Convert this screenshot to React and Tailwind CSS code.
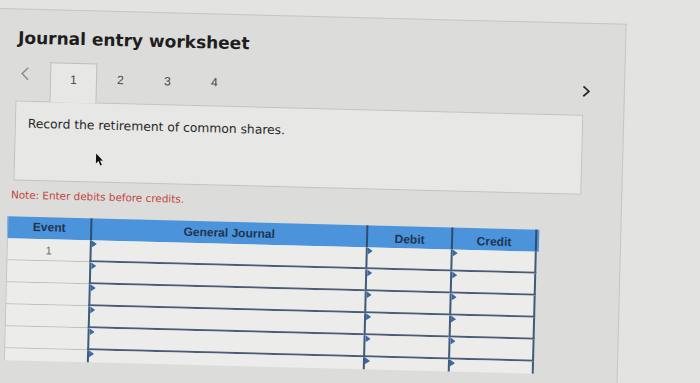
import React from "react";

function Marker() {
  return (
    <svg className="absolute left-0 top-0" width="5" height="7" viewBox="0 0 5 7">
      <polygon points="0,0 5,3.5 0,7" fill="#3a6aa6" />
    </svg>
  );
}

function InputCell({ w, last, noBottom }) {
  return (
    <div
      className={
        "relative h-full border-l-2 border-[#3f5a7a] bg-[#ecedeb] " +
        (noBottom ? "" : "border-b-2 border-b-[#4a5d76] ") +
        (last ? "border-r-2 border-r-[#3f5a7a] " : "") +
        w
      }
    >
      <Marker />
    </div>
  );
}

function Row({ num, h, noBottom }) {
  return (
    <div className={"flex " + h}>
      <div
        className={
          "w-[83px] h-full border-l border-[#c4c4c2] bg-[#ecedeb] flex justify-center pt-[3px] text-[11px] text-[#6a6a6a] " +
          (noBottom ? "" : "border-b border-b-[#bdbdbb]")
        }
      >
        {num}
      </div>
      <InputCell w="w-[276px]" noBottom={noBottom} />
      <InputCell w="w-[85px]" noBottom={noBottom} />
      <InputCell w="w-[86px]" last noBottom={noBottom} />
    </div>
  );
}

export default function App() {
  return (
    <div
      className="relative w-[700px] h-[383px] overflow-hidden bg-[#e3e3e1]"
      style={{ fontFamily: '"DejaVu Sans", Verdana, sans-serif' }}
    >
      <div className="origin-top-left rotate-[1.45deg] pt-[8px]">
        <div className="ml-[-2px] w-[629px] h-[430px] bg-[#dcdcda] border border-[#c6c6c4]">
          <div className="ml-[20px] mt-[18px] text-[17px] leading-[20px] font-bold text-[#1e1e1e]">
            Journal entry worksheet
          </div>

          <div
            className="relative z-10 ml-[19px] mt-[14px] w-[580px] h-[40px] flex items-stretch text-[12px] text-[#4a4a4a]"
            style={{ fontFamily: '"Liberation Sans", Arial, sans-serif' }}
          >
            <div className="w-[34px] flex items-center pl-[4px] pb-[16px]">
              <svg width="9" height="14" viewBox="0 0 9 14">
                <polyline points="8,1 2,7 8,13" fill="none" stroke="#8a8a8a" strokeWidth="1.4" />
              </svg>
            </div>
            <div className="w-[47px] h-[40px] border border-b-0 border-[#bdbdbb] bg-[#e7e7e5] flex justify-center pt-[7px]">
              1
            </div>
            <div className="w-[47px] flex justify-center pt-[7px]">2</div>
            <div className="w-[47px] flex justify-center pt-[7px]">3</div>
            <div className="w-[47px] flex justify-center pt-[7px]">4</div>
            <div className="ml-auto w-[20px] flex justify-center pt-[9px]">
              <svg width="9" height="13" viewBox="0 0 9 13">
                <polyline points="1.5,1.5 7,6.5 1.5,11.5" fill="none" stroke="#2a2a2a" strokeWidth="1.8" />
              </svg>
            </div>
          </div>

          <div className="relative ml-[19px] mt-[-1px] w-[568px] h-[80px] border border-[#c2c2c0] bg-[#e7e7e5] pl-[12px] pt-[14px] text-[12.3px] leading-[16px] text-[#2a2a2a]">
            Record the retirement of common shares.
            <svg className="absolute left-[80px] top-[50px]" width="9" height="13" viewBox="0 0 9 13">
              <polygon points="1,0 1,10 3.5,7.5 5.5,12 7,11.3 5,7 8,7" fill="#111" />
            </svg>
          </div>

          <div className="ml-[17px] mt-[8px] text-[10.4px] leading-[12px] text-[#c2453f]">
            Note: Enter debits before credits.
          </div>

          <div className="ml-[14px] mt-[16px] w-[532px]" style={{ fontFamily: '"Liberation Sans", Arial, sans-serif' }}>
            <div className="flex h-[22px] bg-[#4b93da] text-[12px] font-bold text-[#1f3550]">
              <div className="w-[83px] flex justify-center items-center pb-[3px] border-l border-[#8ab4e0]">Event</div>
              <div className="w-[276px] flex justify-center items-center border-l-2 border-[#2f4d70]">General Journal</div>
              <div className="w-[85px] flex justify-center items-center pt-[4px] border-l-2 border-[#2f4d70]">Debit</div>
              <div className="w-[86px] flex justify-center items-center pt-[4px] border-l-2 border-r-2 border-[#2f4d70]">Credit</div>
            </div>
            <Row num="1" h="h-[22px]" />
            <Row num="" h="h-[22px]" />
            <Row num="" h="h-[22px]" />
            <Row num="" h="h-[22px]" />
            <Row num="" h="h-[22px]" />
            <Row num="" h="h-[12px]" noBottom />
          </div>
        </div>
      </div>
    </div>
  );
}
